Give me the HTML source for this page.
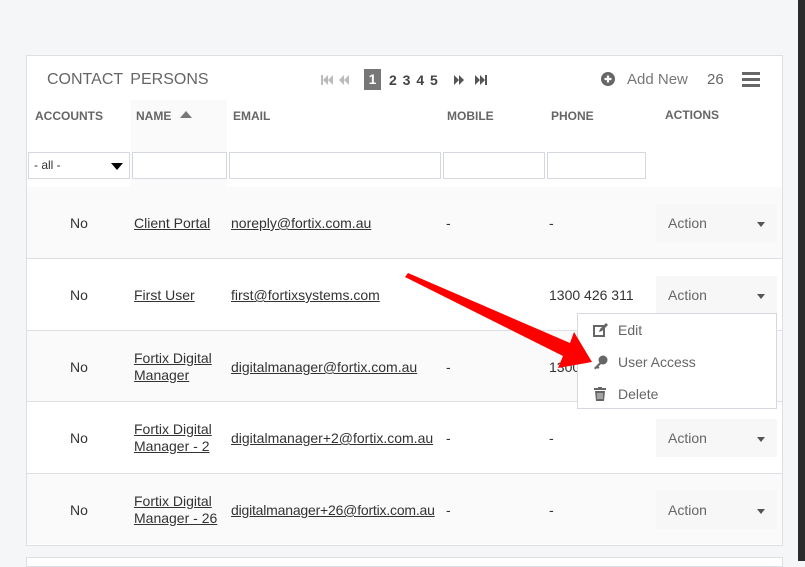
<!DOCTYPE html>
<html><head><style>
*{margin:0;padding:0;box-sizing:border-box}
body{width:805px;height:561px;background:#f5f6f8;font-family:"Liberation Sans",sans-serif;position:relative;overflow:hidden;color:#333}
.dark{position:absolute;left:798px;top:0;width:7px;height:561px;background:#2b2b2b}
.panel{position:absolute;left:26px;top:55px;width:757px;height:491px;background:#fff;border:1px solid #dcdfe4}
.panel2{position:absolute;left:26px;top:557px;width:757px;height:10px;background:#fff;border:1px solid #dcdfe4}
.a{position:absolute;white-space:nowrap}
.title{left:47px;top:71px;font-size:16px;color:#666;word-spacing:3px}
.pg{top:72px;font-size:14px;font-weight:bold;color:#444}
.th{top:109px;font-size:12px;font-weight:bold;color:#666}
.inp{position:absolute;top:152px;height:27px;border:1px solid #d5d8de;background:#fff}
.row{position:absolute;left:27px;width:755px;height:71px;border-top:1px solid #dcdfe4}
.g{background:#fafafa}
.td{font-size:14px;color:#333}
.u{text-decoration:underline}
.act{position:absolute;left:656px;width:121px;height:38px;background:#f7f7f7}
.act span{position:absolute;left:12px;top:11px;font-size:14px;color:#666}
.act i{position:absolute;right:12px;top:18px;border-left:4px solid transparent;border-right:4px solid transparent;border-top:5px solid #555}
.menu{position:absolute;left:577px;top:313px;width:200px;height:96px;background:#fff;border:1px solid #d5d8de}
.mi{position:absolute;left:40px;font-size:14px;color:#666}
</style></head><body>
<div class="dark"></div>
<div class="panel"></div>
<div class="panel2"></div>
<div class="a title">CONTACT PERSONS</div>
<svg class="a" style="left:321px;top:75px" width="36" height="10" fill="#bbb"><rect x="0" y="0" width="2" height="10"/><path d="M7 0L2 5l5 5zM12 0L7 5l5 5z"/><path d="M23 0l-5 5 5 5zM28 0l-5 5 5 5z"/></svg>
<div class="a" style="left:364px;top:69px;width:17px;height:21px;background:#777;color:#fff;font-weight:bold;font-size:14px;text-align:center;line-height:21px">1</div>
<div class="a pg" style="left:389px;word-spacing:2px">2 3 4 5</div>
<svg class="a" style="left:454px;top:75px" width="36" height="10" fill="#555"><path d="M0 0l5 5-5 5zM5 0l5 5-5 5z"/><path d="M21 0l5 5-5 5zM26 0l5 5-5 5z"/><rect x="31" y="0" width="2" height="10"/></svg>
<svg class="a" style="left:601px;top:72px" width="14" height="14"><circle cx="7" cy="7" r="7" fill="#666"/><path d="M7 3.5v7M3.5 7h7" stroke="#fff" stroke-width="2.2"/></svg>
<div class="a" style="left:627px;top:71px;font-size:15px;color:#777">Add New</div>
<div class="a" style="left:707px;top:71px;font-size:15px;color:#666">26</div>
<div class="a" style="left:742px;top:72px;width:18px;height:3px;background:#666;box-shadow:0 6px 0 #666,0 12px 0 #666"></div>
<div class="a" style="left:131px;top:100px;width:96px;height:87px;background:#fafafa"></div>
<div class="a th" style="left:35px">ACCOUNTS</div>
<div class="a th" style="left:136px">NAME</div>
<svg class="a" style="left:180px;top:111px" width="12" height="7"><path d="M0 7L6 0l6 7z" fill="#777"/></svg>
<div class="a th" style="left:233px">EMAIL</div>
<div class="a th" style="left:447px">MOBILE</div>
<div class="a th" style="left:551px">PHONE</div>
<div class="a th" style="left:665px;top:108px">ACTIONS</div>
<div class="inp" style="left:28px;width:102px"><span style="position:absolute;left:5px;top:5px;font-size:12px">- all -</span><i style="position:absolute;right:6px;top:10px;border-left:6px solid transparent;border-right:6px solid transparent;border-top:7px solid #000"></i></div>
<div class="inp" style="left:132px;width:95px"></div>
<div class="inp" style="left:229px;width:212px"></div>
<div class="inp" style="left:443px;width:102px"></div>
<div class="inp" style="left:547px;width:99px"></div>

<div class="row g" style="top:187px;border-top:none"></div>
<div class="row" style="top:258px"></div>
<div class="row g" style="top:330px"></div>
<div class="row" style="top:401px"></div>
<div class="row g" style="top:473px"></div>

<div class="a td" style="left:70px;top:215px">No</div>
<div class="a td u" style="left:134px;top:215px">Client Portal</div>
<div class="a td u" style="left:231px;top:215px">noreply@fortix.com.au</div>
<div class="a td" style="left:446px;top:215px">-</div>
<div class="a td" style="left:549px;top:215px">-</div>
<div class="act" style="top:204px"><span>Action</span><i></i></div>

<div class="a td" style="left:70px;top:287px">No</div>
<div class="a td u" style="left:134px;top:287px">First User</div>
<div class="a td u" style="left:231px;top:287px">first@fortixsystems.com</div>
<div class="a td" style="left:549px;top:287px">1300 426 311</div>
<div class="act" style="top:276px"><span>Action</span><i></i></div>

<div class="a td" style="left:70px;top:359px">No</div>
<div class="a td u" style="left:134px;top:350px;line-height:17px">Fortix Digital<br>Manager</div>
<div class="a td u" style="left:231px;top:359px">digitalmanager@fortix.com.au</div>
<div class="a td" style="left:446px;top:359px">-</div>
<div class="a td" style="left:549px;top:359px">1300</div>

<div class="a td" style="left:70px;top:430px">No</div>
<div class="a td u" style="left:134px;top:421px;line-height:17px">Fortix Digital<br>Manager - 2</div>
<div class="a td u" style="left:231px;top:430px">digitalmanager+2@fortix.com.au</div>
<div class="a td" style="left:446px;top:430px">-</div>
<div class="a td" style="left:549px;top:430px">-</div>
<div class="act" style="top:419px"><span>Action</span><i></i></div>

<div class="a td" style="left:70px;top:502px">No</div>
<div class="a td u" style="left:134px;top:493px;line-height:17px">Fortix Digital<br>Manager - 26</div>
<div class="a td u" style="left:231px;top:502px;letter-spacing:-0.2px">digitalmanager+26@fortix.com.au</div>
<div class="a td" style="left:446px;top:502px">-</div>
<div class="a td" style="left:549px;top:502px">-</div>
<div class="act" style="top:491px"><span>Action</span><i></i></div>

<div class="menu">
<svg style="position:absolute;left:15px;top:9px" width="15" height="14"><rect x="1" y="3" width="10" height="10" fill="none" stroke="#666" stroke-width="2"/><path d="M6 9l1-3 6-6 2 2-6 6z" fill="#666"/></svg>
<div class="mi" style="top:8px">Edit</div>
<svg style="position:absolute;left:15px;top:41px" width="15" height="15"><circle cx="10" cy="5" r="4.5" fill="#666"/><path d="M8 6L1 13l1.5 1.5 1.5-1.5 1 1 1.5-1.5-1-1L9 8z" fill="#666"/></svg>
<div class="mi" style="top:40px">User Access</div>
<svg style="position:absolute;left:16px;top:73px" width="12" height="14"><rect x="0" y="1" width="12" height="2" fill="#666"/><rect x="4" y="0" width="4" height="2" fill="#666"/><path d="M1 4h10l-1 10H2z" fill="#666"/><path d="M4 6v6M6 6v6M8 6v6" stroke="#fff" stroke-width="0.8"/></svg>
<div class="mi" style="top:72px">Delete</div>
</div>

<svg class="a" style="left:0;top:0" width="805" height="561"><path d="M405 277 L408 273 L570 343 L574 332 L592 362 L558 368 L563 356 Z" fill="#f00"/></svg>
</body></html>
